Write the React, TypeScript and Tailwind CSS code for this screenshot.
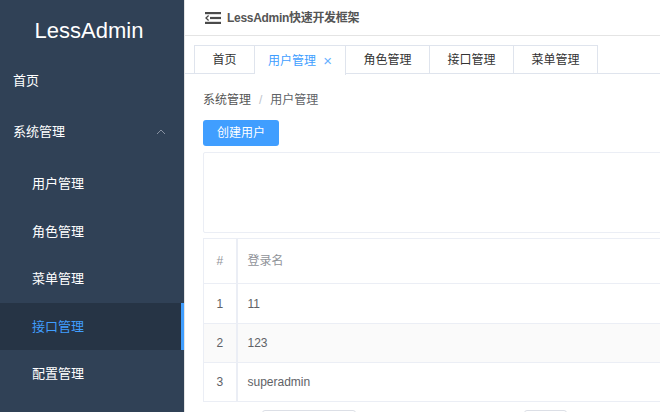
import React from 'react'

const FONT = { fontFamily: '"Liberation Sans", "Noto Sans CJK SC", sans-serif' }

const subMenu = ['用户管理', '角色管理', '菜单管理', '接口管理', '配置管理']
const tabs = ['首页', '用户管理', '角色管理', '接口管理', '菜单管理']
const rows = [
  { id: 1, name: '11' },
  { id: 2, name: '123' },
  { id: 3, name: 'superadmin' },
]

function FoldIcon() {
  return (
    <svg width="16" height="12" viewBox="0 0 16 12" className="shrink-0">
      <rect x="0" y="0" width="16" height="2.2" fill="#4a4a4a" />
      <rect x="5" y="4.9" width="11" height="2.2" fill="#4a4a4a" />
      <rect x="0" y="9.8" width="16" height="2.2" fill="#4a4a4a" />
      <path d="M3.6 3.6 L1 6 L3.6 8.4" fill="none" stroke="#4a4a4a" strokeWidth="1.3" />
    </svg>
  )
}

function Sidebar() {
  return (
    <aside className="w-[184px] shrink-0 bg-[#304156] text-white flex flex-col">
      <div className="h-[58px] flex items-center justify-center text-[22px] text-white pt-[2px] pr-[6px]">LessAdmin</div>
      <div className="h-[46px] flex items-center pl-[13px] text-[13px]">首页</div>
      <div className="h-[56px] flex items-center justify-between pl-[13px] pr-[18px] text-[13px]">
        <span>系统管理</span>
        <svg width="10" height="6" viewBox="0 0 10 6">
          <path d="M1 5 L5 1 L9 5" fill="none" stroke="#8791a1" strokeWidth="1" />
        </svg>
      </div>
      {subMenu.map((m) => {
        const active = m === '接口管理'
        return (
          <div
            key={m}
            className={`h-[47.5px] flex items-center pl-[32px] text-[13px] ${active ? 'bg-[#263445] text-[#409eff] border-r-[3px] border-[#409eff]' : 'text-white'}`}
          >
            {m}
          </div>
        )
      })}
    </aside>
  )
}

function Tabs() {
  return (
    <div className="flex h-[29px] border-b border-[#dfe4ed] pl-[9px]">
      {tabs.map((t, i) => {
        const active = t === '用户管理' && i === 1
        return (
          <div
            key={t}
            className={`flex items-center justify-center h-[29px] border-t border-r border-[#dfe4ed] text-[12px] ${i === 0 ? 'border-l w-[61px]' : 'w-[84px]'} ${active ? 'w-[91px] bg-white text-[#409eff] h-[30px] -mb-px' : 'text-[#333]'}`}
          >
            {t}
            {active && <span className="ml-[7px] text-[15px] font-light leading-none text-[#66b1ff]">×</span>}
          </div>
        )
      })}
    </div>
  )
}

export default function App() {
  return (
    <div className="flex h-[412px] w-[660px] overflow-hidden bg-white" style={FONT}>
      <Sidebar />
      <main className="flex-1 min-w-0 flex flex-col border-l border-[#e3e3e3] overflow-hidden">
        <header className="h-[36px] shrink-0 flex items-center gap-[6px] pl-[20px] border-b border-[#e4e4e4] shadow-[0_1px_3px_rgba(0,0,0,0.08)]">
          <FoldIcon />
          <span className="text-[12px] font-semibold tracking-[-0.3px] text-[#555]">LessAdmin快速开发框架</span>
        </header>
        <div className="pt-[9px] bg-white">
          <Tabs />
        </div>
        <div className="px-[18px] pt-[18px] w-[700px]">
          <div className="flex items-center text-[12px] leading-[16px] text-[#606266]">
            <span className="text-[#555]">系统管理</span>
            <span className="mx-[8px] text-[#c0c4cc]">/</span>
            <span>用户管理</span>
          </div>
          <button className="mt-[12px] h-[26px] w-[76px] rounded-[3px] bg-[#409eff] text-white text-[12px]">创建用户</button>
          <div className="mt-[6px] h-[81px] border border-[#ebeef5] rounded-[2px]" />
          <table className="mt-[5px] w-full border border-[#ebeef5] border-collapse text-[12px]">
            <thead>
              <tr className="h-[45px]">
                <th className="w-[33px] border-r-2 border-b border-[#ebeef5] text-[#909399] font-normal">#</th>
                <th className="border-b border-[#ebeef5] text-left pl-[10px] text-[#909399] font-normal">登录名</th>
              </tr>
            </thead>
            <tbody>
              {rows.map((r, i) => (
                <tr key={r.id} className={`${i === 0 ? 'h-[40px]' : 'h-[39px]'} ${i === 1 ? 'bg-[#fafafa]' : 'bg-white'}`}>
                  <td className="border-r-2 border-b border-[#ebeef5] text-center text-[#606266]">{r.id}</td>
                  <td className="border-b border-[#ebeef5] pl-[10px] text-[#606266]">{r.name}</td>
                </tr>
              ))}
            </tbody>
          </table>
          <div className="mt-[8px] flex">
            <div className="ml-[59px] h-[24px] w-[94px] border border-[#dcdfe6] rounded-[3px]" />
            <div className="ml-[168px] h-[24px] w-[43px] border border-[#dcdfe6] rounded-[3px]" />
          </div>
        </div>
      </main>
    </div>
  )
}
